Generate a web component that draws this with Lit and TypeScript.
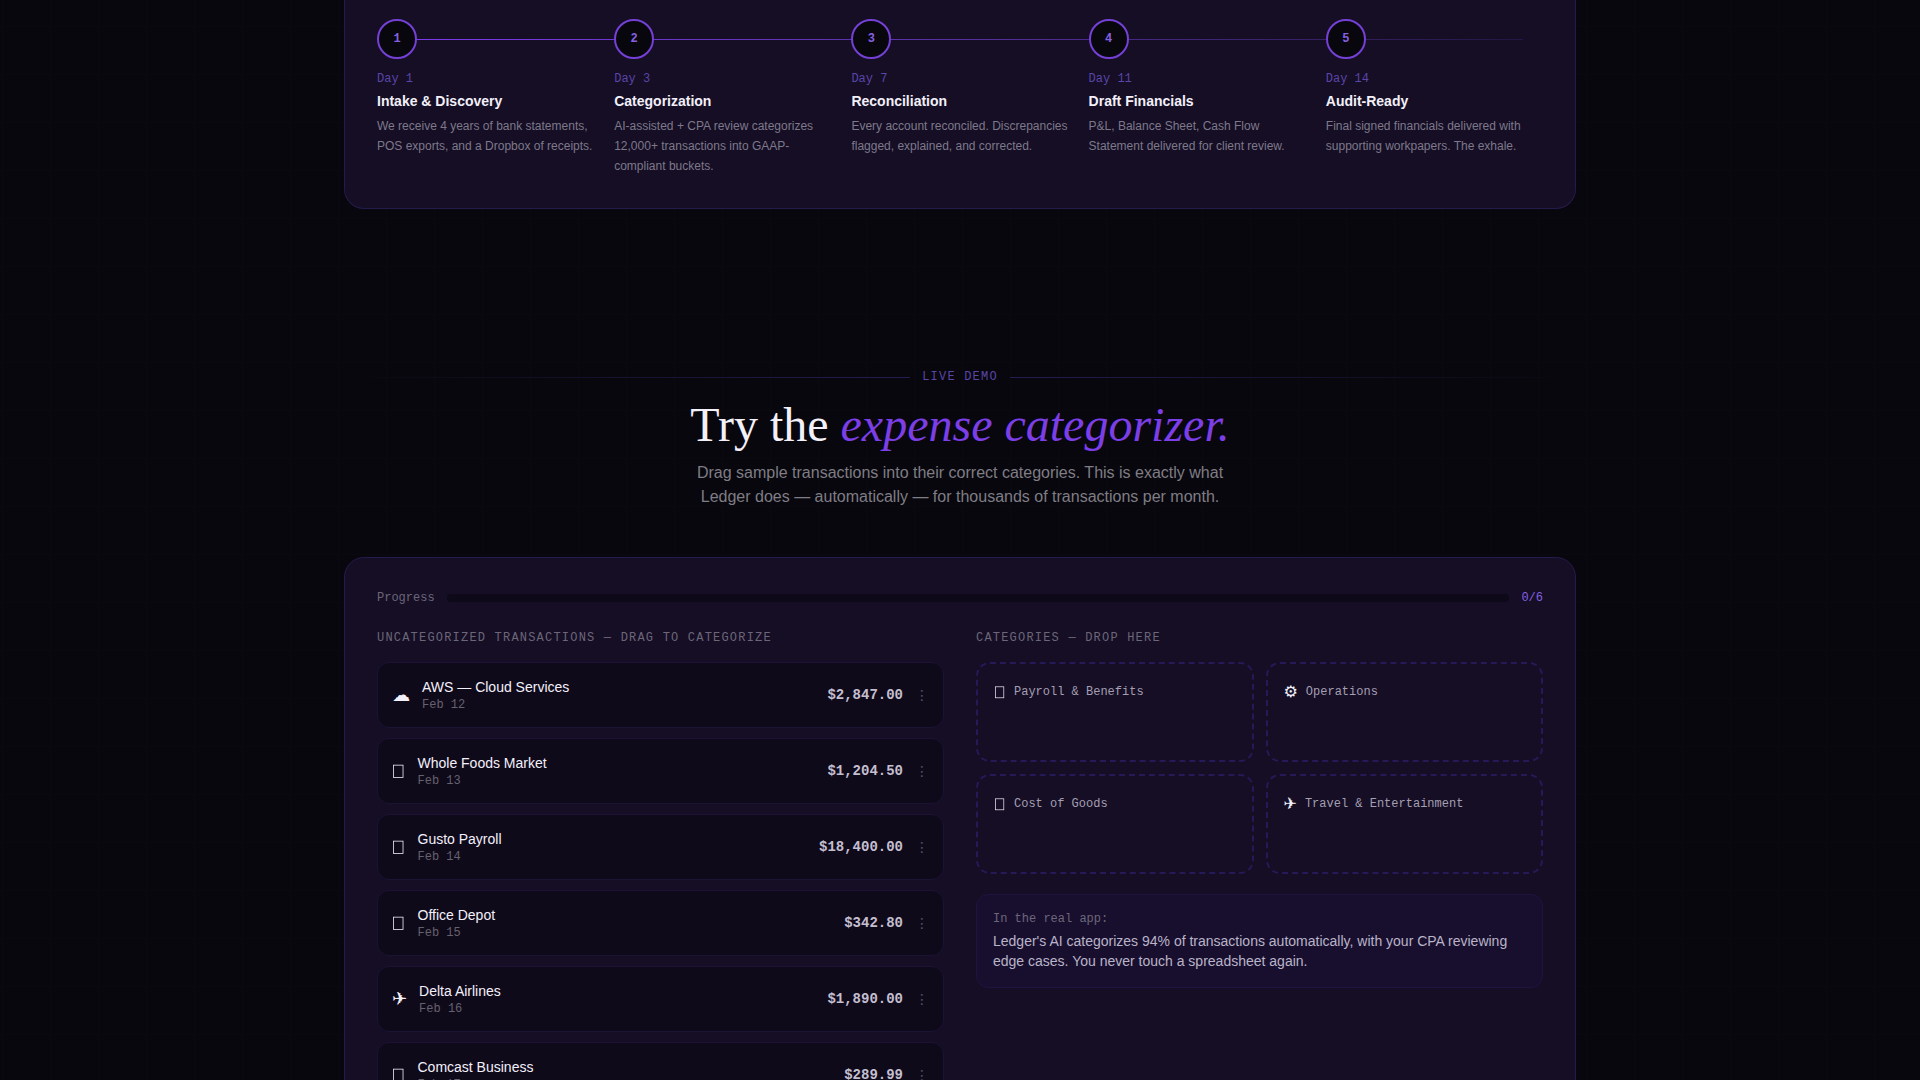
import { LitElement, html, css, svg, nothing } from "lit";
import { customElement, property } from "lit/decorators.js";

const mono = css`"Liberation Mono", monospace`;

interface Step { day: string; title: string; text: string; }
interface Transaction { icon: string; name: string; date: string; amount: string; }
interface Category { icon: string; name: string; }

const steps: Step[] = [
  { day: "Day 1", title: "Intake & Discovery", text: "We receive 4 years of bank statements, POS exports, and a Dropbox of receipts." },
  { day: "Day 3", title: "Categorization", text: "AI-assisted + CPA review categorizes 12,000+ transactions into GAAP-compliant buckets." },
  { day: "Day 7", title: "Reconciliation", text: "Every account reconciled. Discrepancies flagged, explained, and corrected." },
  { day: "Day 11", title: "Draft Financials", text: "P&L, Balance Sheet, Cash Flow Statement delivered for client review." },
  { day: "Day 14", title: "Audit-Ready", text: "Final signed financials delivered with supporting workpapers. The exhale." },
];

const transactions: Transaction[] = [
  { icon: "☁", name: "AWS — Cloud Services", date: "Feb 12", amount: "$2,847.00" },
  { icon: "", name: "Whole Foods Market", date: "Feb 13", amount: "$1,204.50" },
  { icon: "", name: "Gusto Payroll", date: "Feb 14", amount: "$18,400.00" },
  { icon: "", name: "Office Depot", date: "Feb 15", amount: "$342.80" },
  { icon: "✈", name: "Delta Airlines", date: "Feb 16", amount: "$1,890.00" },
  { icon: "", name: "Comcast Business", date: "Feb 17", amount: "$289.99" },
];

const categories: Category[] = [
  { icon: "", name: "Payroll & Benefits" },
  { icon: "⚙", name: "Operations" },
  { icon: "", name: "Cost of Goods" },
  { icon: "✈", name: "Travel & Entertainment" },
];

@customElement("glyph-icon")
class GlyphIcon extends LitElement {
  @property() glyph = "";

  static styles = css`
    :host { display: block; flex: none; font-family: "Liberation Sans", "DejaVu Sans", sans-serif; line-height: inherit; }
    .box { display: block; width: 0.75em; height: 1em; }
  `;

  render() {
    return this.glyph
      ? html`<span aria-hidden="true">${this.glyph}</span>`
      : html`<svg class="box" viewBox="0 0 12 16" aria-hidden="true">
          ${svg`<rect x="1.4" y="2.8" width="8.4" height="11" fill="none" stroke="currentColor" stroke-width="0.7"/>`}
        </svg>`;
  }
}

@customElement("step-timeline")
class StepTimeline extends LitElement {
  static styles = css`
    :host { display: block; }
    .steps { position: relative; display: grid; grid-template-columns: repeat(5, 1fr); gap: 20px; margin: 0; padding: 0; list-style: none; }
    .steps::before {
      content: ""; position: absolute; left: 20px; right: 20px; top: 20px; height: 1px;
      background: linear-gradient(90deg, #7c3aed, #55309f 50%, #231745);
    }
    .step { position: relative; }
    .dot {
      display: flex; align-items: center; justify-content: center; box-sizing: border-box; width: 40px; height: 40px;
      border: 2px solid #7440d6; border-radius: 50%; background: #08070d; color: #8560e0;
      font: 700 12px/16px ${mono};
    }
    .day { margin: 12px 0 4px; font: 12px/16px ${mono}; color: #5a45a8; }
    .title { margin: 0 0 5px; font-size: 14px; line-height: 20px; font-weight: 700; color: #f3f0fa; }
    .text { margin: 0; font-size: 12px; line-height: 20px; color: #7e798a; }
  `;

  render() {
    return html`<ol class="steps">
      ${steps.map((s, i) => html`<li class="step">
        <div class="dot">${i + 1}</div>
        <p class="day">${s.day}</p>
        <h3 class="title">${s.title}</h3>
        <p class="text">${s.text}</p>
      </li>`)}
    </ol>`;
  }
}

@customElement("expense-categorizer")
class ExpenseCategorizer extends LitElement {
  static styles = css`
    :host { display: block; }
    .progress { display: flex; align-items: center; gap: 12px; margin-bottom: 24px; font: 12px/16px ${mono}; color: #6c6679; }
    .bar { flex: 1; height: 8px; border-radius: 4px; background: #0d0919; overflow: hidden; }
    .fill { height: 100%; border-radius: 4px; background: #7c3aed; }
    .count { color: #8560e0; }
    .columns { display: grid; grid-template-columns: 1fr 1fr; gap: 32px; }
    .label { margin: 0 0 16px; font: 12px/16px ${mono}; letter-spacing: 0.1em; text-transform: uppercase; color: #6c6679; }
    .list { display: flex; flex-direction: column; gap: 10px; margin: 0; padding: 0; list-style: none; }
    .row {
      display: flex; align-items: center; gap: 12px; padding: 14px; border: 1px solid #1b1236; border-radius: 12px;
      background: #0f0a1a; cursor: grab;
    }
    .row glyph-icon { font-size: 18px; color: #f3f0fa; }
    .info { flex: 1; min-width: 0; }
    .name { font-size: 14px; line-height: 20px; color: #f3f0fa; }
    .date { font: 12px/16px ${mono}; color: #66616f; }
    .amount { font: 700 14px/20px ${mono}; color: #c4bfd0; }
    .grip { font: 14px/20px "DejaVu Sans", sans-serif; color: #57516a; }
    .zones { display: grid; grid-template-columns: 1fr 1fr; gap: 12px; }
    .zone {
      box-sizing: border-box; min-height: 100px; padding: 16px; border: 2px dashed #251957; border-radius: 14px;
    }
    .zone-head { display: flex; align-items: center; gap: 8px; font: 12px/24px ${mono}; color: #a49fb2; }
    .zone-head glyph-icon { font-size: 16px; color: #f3f0fa; }
    .note { margin-top: 20px; padding: 16px; border: 1px solid #1e1440; border-radius: 12px; background: #180f2f; }
    .note-label { margin: 0 0 4px; font: 12px/16px ${mono}; color: #6c6679; }
    .note-text { margin: 0; font-size: 14px; line-height: 20px; color: #bab4c8; }
  `;

  render() {
    const done = 0;
    return html`
      <div class="progress">
        <span id="progress-label">Progress</span>
        <div class="bar" role="progressbar" aria-labelledby="progress-label" aria-valuemin="0" aria-valuemax="6" aria-valuenow=${done}>
          ${done ? html`<div class="fill" style="width:${(done / transactions.length) * 100}%"></div>` : nothing}
        </div>
        <span class="count">${done}/${transactions.length}</span>
      </div>
      <div class="columns">
        <section>
          <h3 class="label">Uncategorized Transactions — Drag to Categorize</h3>
          <ul class="list">
            ${transactions.map((t) => html`<li class="row" draggable="true">
              <glyph-icon .glyph=${t.icon}></glyph-icon>
              <div class="info">
                <div class="name">${t.name}</div>
                <div class="date">${t.date}</div>
              </div>
              <span class="amount">${t.amount}</span>
              <span class="grip" aria-hidden="true">⋮</span>
            </li>`)}
          </ul>
        </section>
        <section>
          <h3 class="label">Categories — Drop Here</h3>
          <div class="zones">
            ${categories.map((c) => html`<div class="zone">
              <div class="zone-head"><glyph-icon .glyph=${c.icon}></glyph-icon><span>${c.name}</span></div>
            </div>`)}
          </div>
          <aside class="note">
            <p class="note-label">In the real app:</p>
            <p class="note-text">Ledger's AI categorizes 94% of transactions automatically, with your CPA reviewing edge cases. You never touch a spreadsheet again.</p>
          </aside>
        </section>
      </div>`;
  }
}

@customElement("app-root")
class AppRoot extends LitElement {
  static styles = css`
    :host {
      display: block; height: 100vh; overflow: hidden; font-family: "Liberation Sans", sans-serif; color: #f3f0fa;
      background-color: #08070d;
      background-image:
        linear-gradient(#0a090f 1px, transparent 1px),
        linear-gradient(90deg, #0a090f 1px, transparent 1px);
      background-size: 48px 48px;
      background-position: 2px 26px;
    }
    .page { max-width: 1232px; margin: 0 auto; padding: 0 24px; }
    .card { padding: 32px; border: 1px solid #261b4d; border-radius: 20px; background: #150e25; }
    .card.cut { padding-top: 19px; border-top: 0; border-radius: 0 0 20px 20px; }
    .demo { padding-top: 160px; }
    .eyebrow { display: flex; align-items: center; gap: 12px; margin: 0 0 16px; font: 12px/16px ${mono}; letter-spacing: 0.1em; color: #5a45a8; }
    .eyebrow::before, .eyebrow::after { content: ""; flex: 1; height: 1px; background: linear-gradient(90deg, transparent, #261c50); }
    .eyebrow::after { background: linear-gradient(90deg, #261c50, transparent); }
    .heading { margin: 0 0 12px; text-align: center; font: 400 48px/48px "Liberation Serif", serif; }
    .heading em { color: #7c3ee6; }
    .lead { max-width: 560px; margin: 0 auto 48px; text-align: center; font-size: 16px; line-height: 24px; color: #7f7d85; }
  `;

  render() {
    return html`<main class="page">
      <div class="card cut"><step-timeline></step-timeline></div>
      <section class="demo">
        <p class="eyebrow">LIVE DEMO</p>
        <h2 class="heading">Try the <em>expense categorizer.</em></h2>
        <p class="lead">Drag sample transactions into their correct categories. This is exactly what Ledger does — automatically — for thousands of transactions per month.</p>
        <div class="card"><expense-categorizer></expense-categorizer></div>
      </section>
    </main>`;
  }
}
